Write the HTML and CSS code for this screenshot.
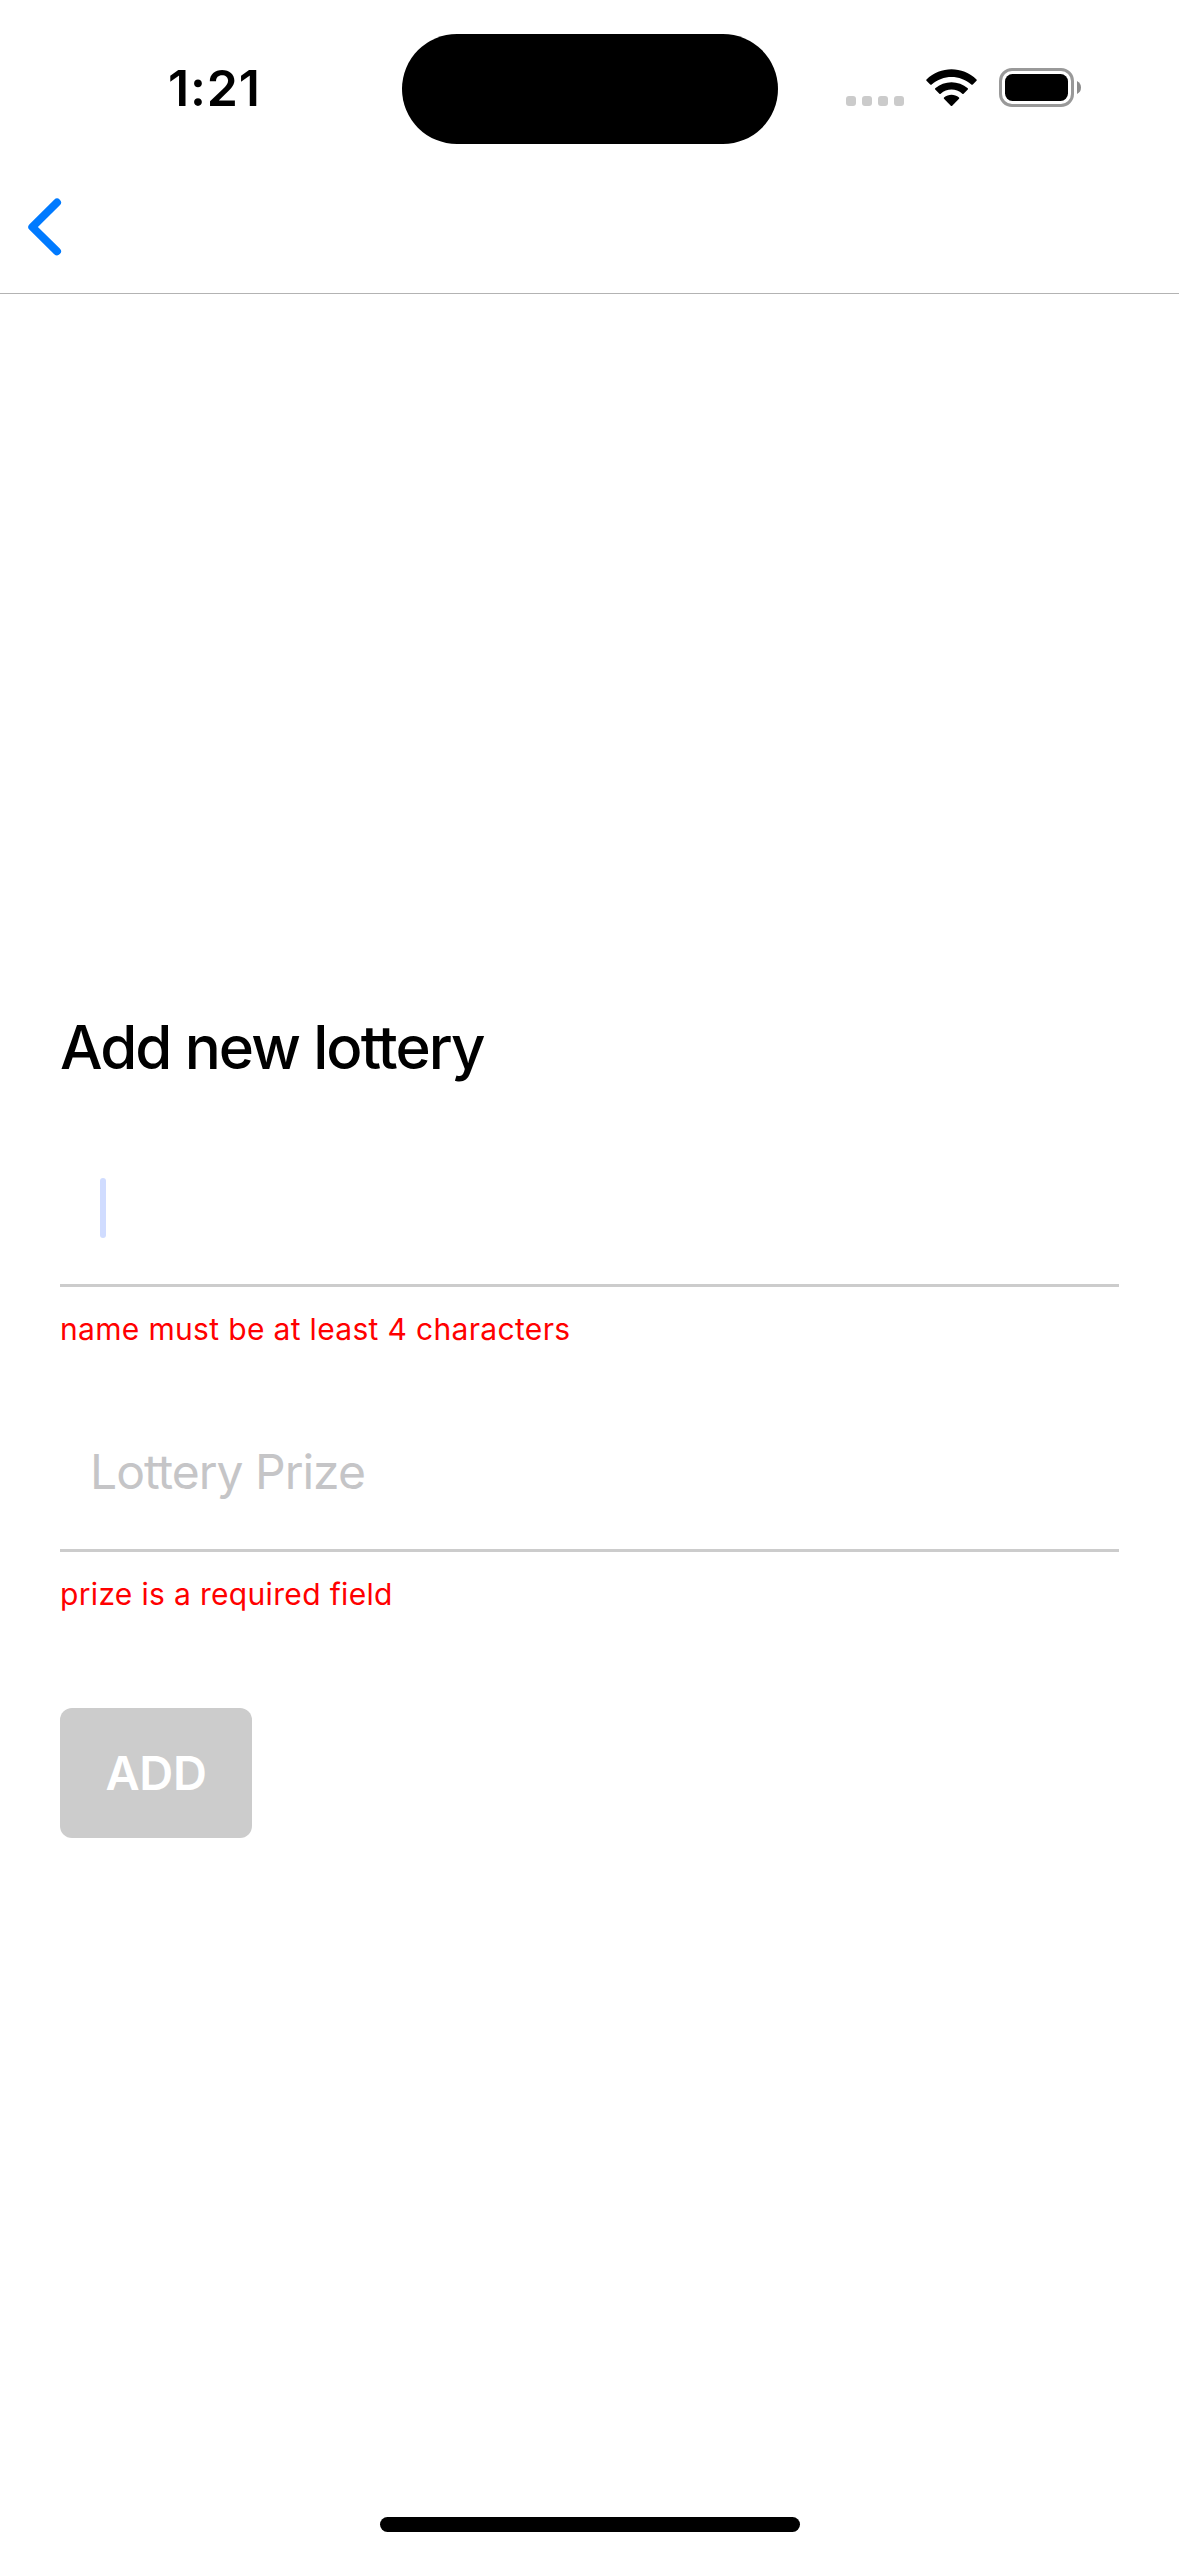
FILE: index.html
```html
<!DOCTYPE html>
<html lang="en">
<head>
<meta charset="utf-8">
<title>Add new lottery</title>
<link rel="stylesheet" href="styles.css">
</head>
<body>
<div class="screen">
  <div class="status">
    <div class="clock"><span>1:21</span></div>
    <div class="island"></div>
    <div class="indicators">
      <svg class="signal" width="58" height="10" viewBox="0 0 58 10" fill="#cbcbcb">
        <rect width="10" height="10" rx="3"/><rect x="16" width="10" height="10" rx="3"/><rect x="32" width="10" height="10" rx="3"/><rect x="48" width="10" height="10" rx="3"/>
      </svg>
      <svg class="wifi" width="51" height="38" viewBox="0 0 51 38">
        <path d="M.5 10.5C14.5-3.1 36.500-3.100 50.500 10.500Q51 11.200 50.500 11.800L46.800 15.500Q46 16 45.300 15.500C34 5.500 17 5.500 5.700 15.500Q5 16 4.200 15.500L.5 11.800Q0 11.200.5 10.500Z"/>
        <path d="M9.200 19.300C18.300 11.300 32.700 11.300 41.800 19.300Q42.200 20 41.800 20.600L37.600 24.700Q37 25.100 36.300 24.700C30 19.200 21 19.200 14.700 24.700Q14 25.100 13.400 24.700L9.200 20.600Q8.800 20 9.200 19.300Z"/>
        <path d="M18 28.400C22.500 24.800 28.500 24.800 33 28.400Q33.500 29.100 33 29.700L26.200 36.800Q25.500 37.400 24.800 36.800L18 29.700Q17.500 29.100 18 28.400Z"/>
      </svg>
      <svg class="battery" width="82" height="39" viewBox="0 0 82 39">
        <rect x="1.500" y="1.500" width="72" height="36" rx="11.500" fill="none" stroke="#999" stroke-width="3"/>
        <rect x="6" y="6" width="63" height="27" rx="7.500"/>
        <path d="M78 13Q82 15 82 19.500T78 26Z" fill="#8c8c8c"/>
      </svg>
    </div>
  </div>
  <header class="nav">
    <svg class="back" width="34" height="58" viewBox="0 0 34 58" fill="none" stroke="#007aff" stroke-width="8" stroke-linecap="round" stroke-linejoin="round">
      <path d="M29 4.500 4.300 29 29 53.300"/>
    </svg>
  </header>
  <main class="form">
    <h1 class="title">Add new lottery</h1>
    <div class="field"><span class="caret"></span></div>
    <p class="error error-name">name must be at least 4 characters</p>
    <div class="field"><span class="placeholder">Lottery Prize</span></div>
    <p class="error error-prize">prize is a required field</p>
    <button class="add" type="button">ADD</button>
  </main>
  <div class="home"></div>
</div>
</body>
</html>
```
FILE: styles.css
```css
* { box-sizing: border-box; }
body { margin: 0; background: #fff; }
.screen {
  width: 1179px;
  height: 2556px;
  display: flex;
  flex-direction: column;
  background: #fff;
  color: #000;
  font-family: Inter, "Liberation Sans", sans-serif;
}
.status {
  height: 177px;
  display: grid;
  grid-template-columns: 401.5px 376px 1fr;
  align-items: start;
}
.clock {
  padding: 58px 0 0 168px;
  font-size: 50px;
  line-height: 60px;
  font-weight: 600;
  letter-spacing: 0.8px;
}
.island {
  height: 110.500px;
  margin-top: 33.500px;
  border-radius: 56px;
  background: #000;
}
.indicators {
  display: flex;
  align-items: flex-start;
  padding: 68px 0 0 68.500px;
}
.signal { margin: 28px 22px 0 0; }
.wifi { margin: 0.5px 22px 0 0; }
.nav {
  height: 117px;
  padding: 20.500px 0 0 28px;
  border-bottom: 1px solid #b3b3b3;
}
.back { display: block; }
.form {
  flex: 1;
  display: flex;
  flex-direction: column;
  align-items: flex-start;
  padding: 717px 60px 0;
}
.title {
  margin: 0 0 19px;
  font-size: 60px;
  line-height: 72px;
  font-weight: 500;
  letter-spacing: -1.900px;
}
.field {
  width: 100%;
  height: 155px;
  margin-top: 30px;
  padding: 0 30px;
  display: flex;
  align-items: center;
  border-bottom: 3px solid #ccc;
}
.caret {
  width: 6px;
  height: 60px;
  margin-left: 10px;
  border-radius: 3px;
  background: #d0dcff;
}
.placeholder {
  padding-bottom: 2px;
  color: #c5c5c7;
  font-size: 48px;
  line-height: 58px;
  letter-spacing: -1px;
}
.error {
  margin: 23px 0 0;
  color: #f00;
  font-size: 30px;
  line-height: 38px;
  letter-spacing: 0.330px;
}
.error-name { margin-bottom: 19px; }
.add {
  width: 192px;
  height: 130px;
  margin: 95px 0 0;
  padding: 0;
  border: 0;
  border-radius: 12px;
  background: #ccc;
  color: #fff;
  font: 600 47px/58px Inter, "Liberation Sans", sans-serif;
  letter-spacing: -0.3px;
}
.home {
  width: 420px;
  height: 15px;
  margin: 0 auto 24px 380px;
  border-radius: 7.500px;
  background: #000;
}
```
